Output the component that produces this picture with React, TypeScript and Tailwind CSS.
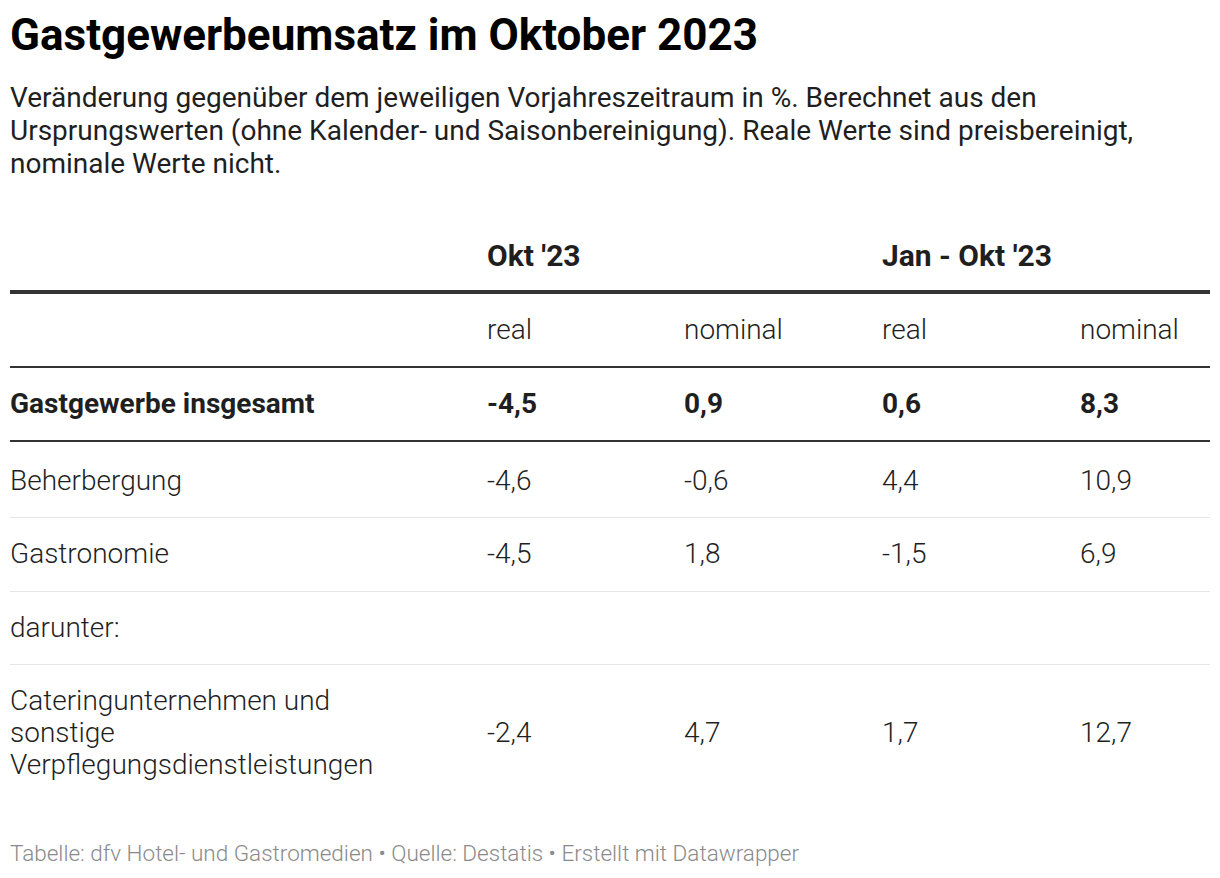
const cols = 'grid grid-cols-[477px_197px_198px_198px_1fr]'

type Row = { label: string; values: string[] }

const rows: Row[] = [
  { label: 'Beherbergung', values: ['-4,6', '-0,6', '4,4', '10,9'] },
  { label: 'Gastronomie', values: ['-4,5', '1,8', '-1,5', '6,9'] },
  { label: 'darunter:', values: ['', '', '', ''] },
  { label: 'Cateringunternehmen und sonstige Verpflegungsdienstleistungen', values: ['-2,4', '4,7', '1,7', '12,7'] },
]

function DataRow({ row, first, last }: { row: Row; first: boolean; last: boolean }) {
  return (
    <div
      className={`${cols} items-center text-[28px] leading-[32px] font-light text-[#1f1f1f] ${first ? 'pt-[23px] pb-[20px]' : 'py-[20.25px]'} ${last ? '' : 'border-b border-[#e6e6e6]'}`}
    >
      <div className="pr-[77px]">{row.label}</div>
      {row.values.map((v, i) => (
        <div key={i}>{v}</div>
      ))}
    </div>
  )
}

export default function App() {
  return (
    <div className="bg-white min-h-[878px] px-[10px] pt-[9px]" style={{ fontFamily: 'Roboto, "Noto Sans", sans-serif' }}>
      <h1 className="text-[44px] leading-[52px] font-bold text-[#000]">Gastgewerbeumsatz im Oktober 2023</h1>
      <p className="mt-[20px] text-[28px] leading-[33px] text-[#1f1f1f]">
        Veränderung gegenüber dem jeweiligen Vorjahreszeitraum in %. Berechnet aus den Ursprungswerten (ohne Kalender- und Saisonbereinigung). Reale Werte sind preisbereinigt, nominale Werte nicht.
      </p>

      <div className="mt-[58px]">
        <div className={`${cols} pb-[16px] border-b-4 border-[#333] text-[30px] leading-[36px] font-bold text-[#1f1f1f]`}>
          <div />
          <div className="col-span-2">Okt '23</div>
          <div className="col-span-2">Jan - Okt '23</div>
        </div>
        <div className={`${cols} pt-[20px] pb-[19.5px] border-b-2 border-[#333] text-[28px] leading-[32px] font-light text-[#1f1f1f]`}>
          <div />
          <div>real</div>
          <div>nominal</div>
          <div>real</div>
          <div>nominal</div>
        </div>
        <div className={`${cols} pt-[20.5px] pb-[20px] border-b-2 border-[#333] text-[28px] leading-[32px] font-bold text-[#1f1f1f]`}>
          <div>Gastgewerbe insgesamt</div>
          <div>-4,5</div>
          <div>0,9</div>
          <div>0,6</div>
          <div>8,3</div>
        </div>
        {rows.map((r, i) => (
          <DataRow key={r.label} row={r} first={i === 0} last={i === rows.length - 1} />
        ))}
      </div>

      <div className="mt-[37px] text-[22.5px] leading-[28px] font-light text-[#8a8a8a]">
        Tabelle: dfv Hotel- und Gastromedien • Quelle: Destatis • Erstellt mit Datawrapper
      </div>
    </div>
  )
}
